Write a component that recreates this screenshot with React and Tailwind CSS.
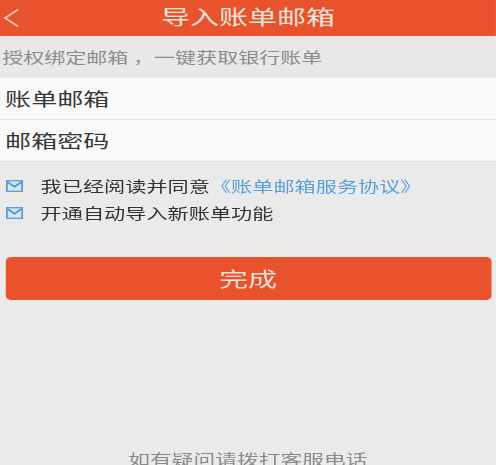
import React from 'react';

const CheckIcon = () => (
  <svg width="12" height="12" viewBox="0 0 12 12" className="shrink-0">
    <rect x="0.7" y="0.7" width="10.6" height="10.6" fill="#d4e6f5" stroke="#5b9bd5" strokeWidth="1.3" />
    <path d="M1.3 2 L6 6.8 L10.7 2" fill="none" stroke="#4a8fd0" strokeWidth="1.4" />
  </svg>
);

export default function App() {
  return (
    <div className="w-[496px] h-[465px] overflow-hidden bg-[#ebeaeb] font-['Noto_Sans_CJK_SC','Noto_Sans',sans-serif]">
      {/* the shot is stretched sideways, so the page is laid out narrow and widened */}
      <div className="w-[342px] origin-top-left scale-x-[1.45]">
        <div className="h-[36px] bg-[#e8532e] grid grid-cols-[1fr_auto_1fr] items-center">
          <svg width="12" height="20" viewBox="0 0 12 20" className="ml-[1.5px]">
            <path d="M10.5 1.5 L1.5 10 L10.5 18.5" fill="none" stroke="#f7cdbd" strokeWidth="1.6" />
          </svg>
          <h1 className="text-[20px] leading-none text-[#fbe3da] pb-[2px]">导入账单邮箱</h1>
          <div />
        </div>

        <div className="h-[42px] bg-[#e8e8e8] flex items-center pl-[1.5px] text-[14.5px] text-[#8c8c8c]">
          授权绑定邮箱 ，一键获取银行账单
        </div>

        <div className="bg-[#fafafa]">
          <div className="h-[42px] flex items-center pl-[3.5px] text-[18px] text-[#383838] border-b border-[#e3e3e3]">
            账单邮箱
          </div>
          <div className="h-[42px] flex items-center pl-[3.5px] text-[18px] text-[#383838] border-b border-[#e3e3e3]">
            邮箱密码
          </div>
        </div>

        <div className="pt-[10px] pl-[3.5px]">
          <div className="h-[27px] flex items-center gap-[12.5px] text-[14.6px] text-[#333]">
            <CheckIcon />
            <span>
              我已经阅读并同意<span className="text-[#5a9fe0]">《账单邮箱服务协议》</span>
            </span>
          </div>
          <div className="h-[27px] flex items-center gap-[12.5px] text-[14.6px] text-[#333]">
            <CheckIcon />
            <span>开通自动导入新账单功能</span>
          </div>
        </div>

        <button className="mt-[31px] mx-[3.5px] w-[335px] h-[43px] rounded-[4px] bg-[#e8532e] text-[20px] text-[#fbe0d6] flex items-center justify-center">
          完成
        </button>

        <p className="mt-[148px] text-center text-[15px] text-[#8a8a8a]">如有疑问请拨打客服电话</p>
      </div>
    </div>
  );
}
